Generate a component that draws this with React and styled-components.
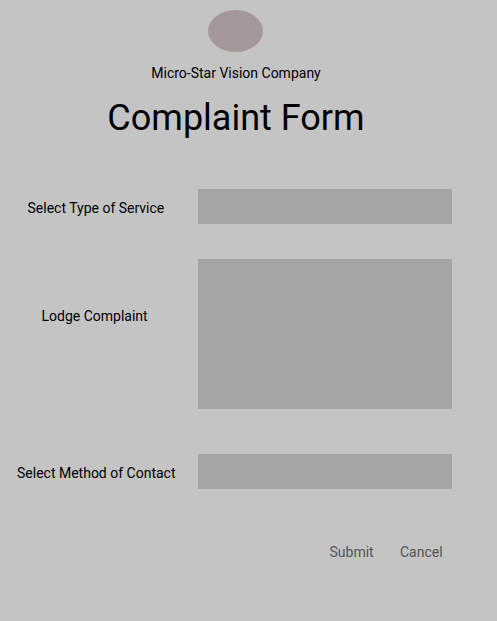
import React from "react";
import styled, { createGlobalStyle } from "styled-components";

const GlobalStyle = createGlobalStyle`
  * { box-sizing: border-box; }
  body { margin: 0; background: #c4c4c4; font-family: Roboto, sans-serif; color: #000; }
`;

const Page = styled.main`
  width: 497px;
  height: 621px;
  overflow: hidden;
  background: #c4c4c4;
`;

const Header = styled.header`
  display: flex;
  flex-direction: column;
  align-items: center;
  width: 472px;
  padding-top: 10px;
`;

const Logo = styled.div`
  width: 55px;
  height: 42px;
  margin-right: 1px;
  border-radius: 50%;
  background: #a69898;
`;

const Company = styled.p`
  margin: 13px 0 0;
  font-size: 14px;
  line-height: 16px;
  white-space: nowrap;
`;

const Title = styled.h1`
  margin: 16px 0 0;
  font-size: 36px;
  font-weight: 400;
  line-height: 42px;
  white-space: nowrap;
`;

const Form = styled.form`
  display: flex;
  flex-direction: column;
  margin-top: 50px;
`;

const Row = styled.div`
  display: grid;
  grid-template-columns: 198px 254px;
  height: ${(p) => p.$height}px;
  margin-bottom: ${(p) => p.$gap}px;
`;

const Label = styled.label`
  padding: ${(p) => p.$top}px 0 0 ${(p) => p.$left}px;
  font-size: 14px;
  line-height: 16px;
  white-space: nowrap;
`;

const Field = styled.input`
  width: 100%;
  height: 100%;
  padding: 8px;
  border: 0;
  border-radius: 0;
  outline: 0;
  background: #a5a5a5;
  font: inherit;
  resize: none;
`;

const Actions = styled.div`
  display: flex;
  gap: 26.3px;
  padding-left: 329.5px;
  margin-top: 10px;
`;

const Action = styled.button`
  padding: 0;
  border: 0;
  background: none;
  color: #555;
  font: 14px/16px Roboto, sans-serif;
`;

export default function App() {
  return (
    <Page>
      <GlobalStyle />
      <Header>
        <Logo />
        <Company>Micro-Star Vision Company</Company>
        <Title>Complaint Form</Title>
      </Header>
      <Form>
        <Row $height={35} $gap={35}>
          <Label htmlFor="service" $top={11} $left={27.5}>Select Type of Service</Label>
          <Field id="service" />
        </Row>
        <Row $height={150} $gap={45}>
          <Label htmlFor="complaint" $top={49} $left={41.5}>Lodge Complaint</Label>
          <Field as="textarea" id="complaint" />
        </Row>
        <Row $height={35} $gap={45}>
          <Label htmlFor="contact" $top={11} $left={17}>Select Method of Contact</Label>
          <Field id="contact" />
        </Row>
        <Actions>
          <Action type="button">Submit</Action>
          <Action type="button">Cancel</Action>
        </Actions>
      </Form>
    </Page>
  );
}
